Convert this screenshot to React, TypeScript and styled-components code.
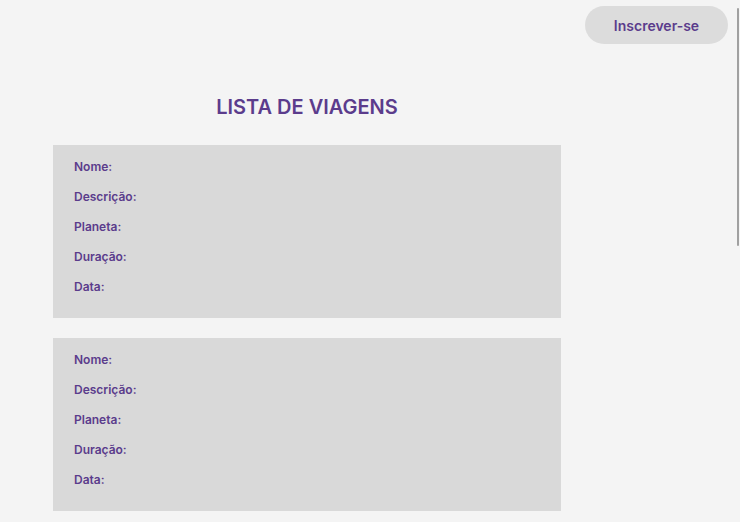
import React from "react";
import styled, { createGlobalStyle } from "styled-components";

const Global = createGlobalStyle`
  html, body { margin: 0; padding: 0; background: #f4f4f4; }
  body { font-family: Inter, "Noto Sans", sans-serif; }
  * { box-sizing: border-box; }
`;

const Page = styled.div`
  height: 522px;
  overflow: hidden;
`;

const ScrollThumb = styled.div`
  position: fixed;
  top: 8px;
  right: 1px;
  width: 2px;
  height: 238px;
  border-radius: 1px;
  background: #a0a0a0;
`;

const Header = styled.header`
  display: flex;
  justify-content: flex-end;
  padding: 6px 12px 0 0;
`;

const SignupButton = styled.button`
  width: 143px;
  height: 38px;
  border: none;
  border-radius: 19px;
  background: #dcdcdc;
  color: #5b3c8c;
  font-family: Inter, sans-serif;
  font-weight: 600;
  font-size: 14px;
  cursor: pointer;
`;

const Main = styled.main`
  width: 508px;
  margin-left: 53px;
  display: flex;
  flex-direction: column;
  gap: 20px;
`;

const Title = styled.h1`
  margin: 51px 0 6px;
  text-align: center;
  color: #5b3c8c;
  font-size: 20px;
  font-weight: 600;
  line-height: 24px;
`;

const Card = styled.section`
  background: #d9d9d9;
  padding: 14px 21px 9px;
  display: flex;
  flex-direction: column;
`;

const Field = styled.p`
  margin: 0;
  height: 30px;
  line-height: 16px;
  color: #5b3c8c;
  font-size: 12px;
  font-weight: 600;
`;

const labels = ["Nome:", "Descrição:", "Planeta:", "Duração:", "Data:"];

export default function App() {
  return (
    <Page>
      <Global />
      <ScrollThumb />
      <Header>
        <SignupButton>Inscrever-se</SignupButton>
      </Header>
      <Main>
        <Title>LISTA DE VIAGENS</Title>
        {[0, 1].map((i) => (
          <Card key={i}>
            {labels.map((l) => (
              <Field key={l}>{l}</Field>
            ))}
          </Card>
        ))}
      </Main>
    </Page>
  );
}
